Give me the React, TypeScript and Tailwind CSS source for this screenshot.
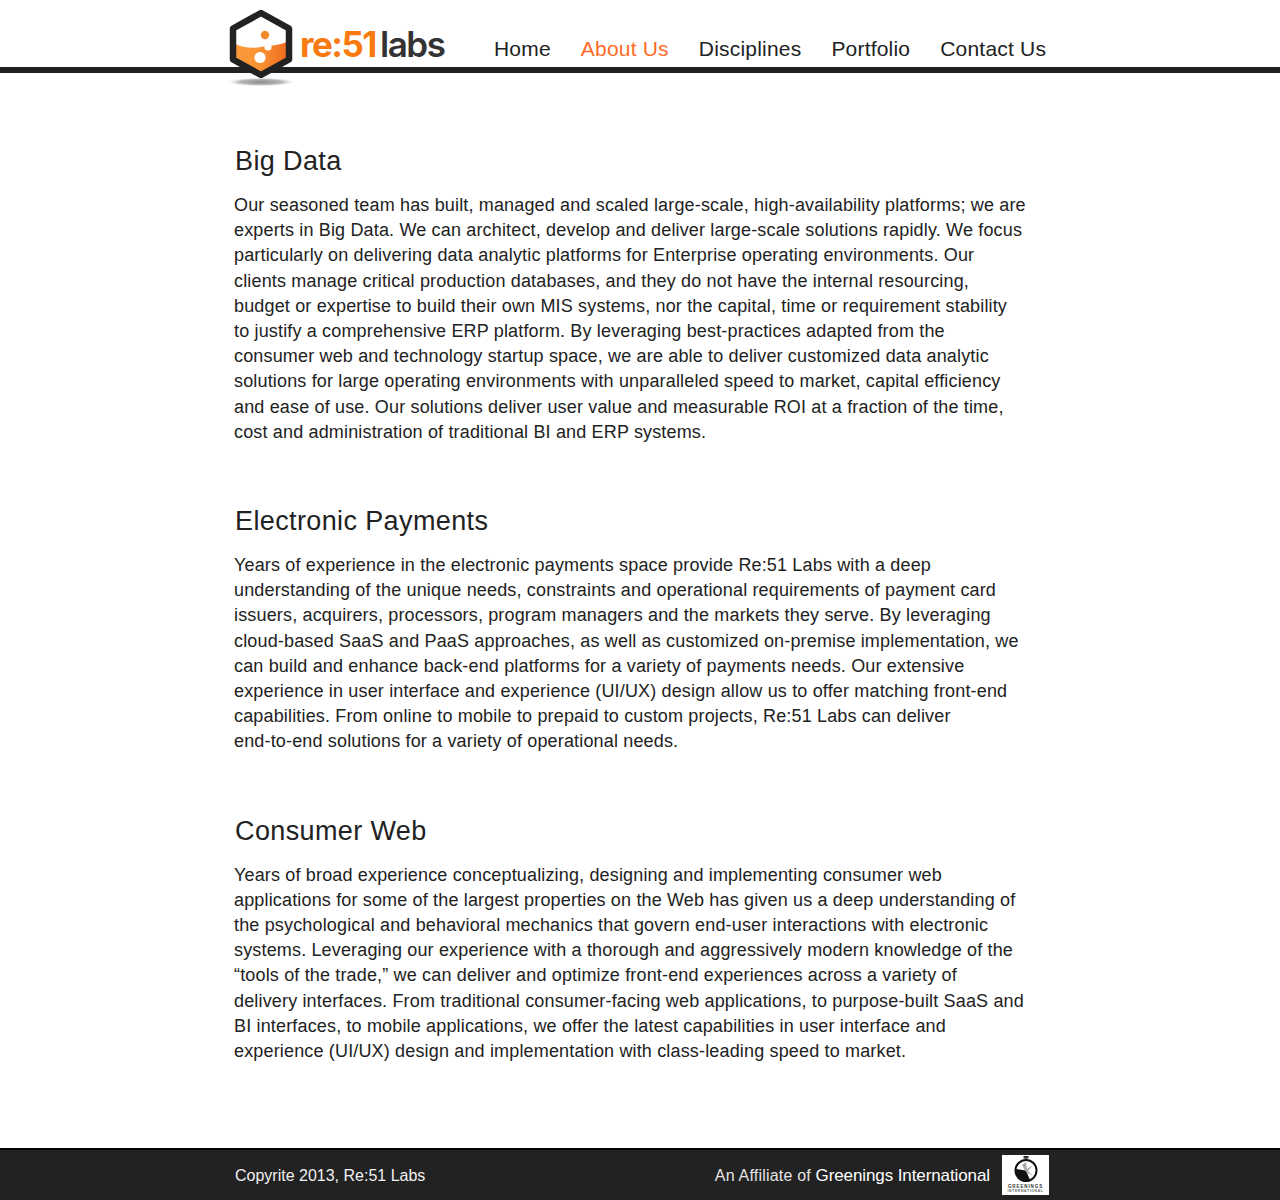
const F = "font-['Liberation_Sans',Arial,sans-serif]";

const sections = [
  {
    title: "Big Data",
    lines: [
      "Our seasoned team has built, managed and scaled large-scale, high-availability platforms; we are",
      "experts in Big Data. We can architect, develop and deliver large-scale solutions rapidly. We focus",
      "particularly on delivering data analytic platforms for Enterprise operating environments. Our",
      "clients manage critical production databases, and they do not have the internal resourcing,",
      "budget or expertise to build their own MIS systems, nor the capital, time or requirement stability",
      "to justify a comprehensive ERP platform. By leveraging best-practices adapted from the",
      "consumer web and technology startup space, we are able to deliver customized data analytic",
      "solutions for large operating environments with unparalleled speed to market, capital efficiency",
      "and ease of use. Our solutions deliver user value and measurable ROI at a fraction of the time,",
      "cost and administration of traditional BI and ERP systems.",
    ],
  },
  {
    title: "Electronic Payments",
    lines: [
      "Years of experience in the electronic payments space provide Re:51 Labs with a deep",
      "understanding of the unique needs, constraints and operational requirements of payment card",
      "issuers, acquirers, processors, program managers and the markets they serve. By leveraging",
      "cloud-based SaaS and PaaS approaches, as well as customized on-premise implementation, we",
      "can build and enhance back-end platforms for a variety of payments needs. Our extensive",
      "experience in user interface and experience (UI/UX) design allow us to offer matching front-end",
      "capabilities. From online to mobile to prepaid to custom projects, Re:51 Labs can deliver",
      "end-to-end solutions for a variety of operational needs.",
    ],
  },
  {
    title: "Consumer Web",
    lines: [
      "Years of broad experience conceptualizing, designing and implementing consumer web",
      "applications for some of the largest properties on the Web has given us a deep understanding of",
      "the psychological and behavioral mechanics that govern end-user interactions with electronic",
      "systems. Leveraging our experience with a thorough and aggressively modern knowledge of the",
      "“tools of the trade,” we can deliver and optimize front-end experiences across a variety of",
      "delivery interfaces. From traditional consumer-facing web applications, to purpose-built SaaS and",
      "BI interfaces, to mobile applications, we offer the latest capabilities in user interface and",
      "experience (UI/UX) design and implementation with class-leading speed to market.",
    ],
  },
];

const nav = ["Home", "About Us", "Disciplines", "Portfolio", "Contact Us"];

function Hex() {
  return (
    <svg width="76" height="90" viewBox="0 0 76 90" className="block">
      <defs>
        <linearGradient id="liq" x1="0" y1="0" x2="1" y2="0">
          <stop offset="0" stopColor="#fb9a3c" />
          <stop offset="0.45" stopColor="#fa9433" />
          <stop offset="1" stopColor="#ef6a1e" />
        </linearGradient>
        <radialGradient id="shadow">
          <stop offset="0" stopColor="#8c8c8c" />
          <stop offset="0.6" stopColor="#b8b8b8" />
          <stop offset="1" stopColor="#ffffff" stopOpacity="0" />
        </radialGradient>
      </defs>
      <ellipse cx="36" cy="82" rx="36" ry="4.5" fill="url(#shadow)" />
      <path d="M36 13 L64 28.5 L64 59.5 L36 75 L8 59.5 L8 28.5 Z" fill="#fff" />
      <path d="M8 43 C18 48 28 48.5 36 47 C46 45 54 46 64 41 L64 59.5 L36 75 L8 59.5 Z" fill="url(#liq)" />
      <path d="M36 13 L64 28.5 L64 59.5 L36 75 L8 59.5 L8 28.5 Z" fill="none" stroke="#222" strokeWidth="6.5" strokeLinejoin="round" />
      <circle cx="40" cy="35" r="4.2" fill="#f58a2c" />
      <circle cx="43" cy="47" r="3.6" fill="#fff" />
      <circle cx="35" cy="57.5" r="5.6" fill="#fff" />
    </svg>
  );
}

export default function App() {
  return (
    <div className={`${F} min-h-[1200px] flex flex-col bg-white text-[#222]`}>
      <header className="relative h-[73px] border-b-[6px] border-[#222]">
        <div className="relative mx-auto w-[812px] h-full">
          <div className="absolute left-[-9px] top-0 z-10 flex">
            <Hex />
          </div>
          <div className="absolute left-[66px] top-[21px] flex items-baseline text-[35px] leading-[46px] font-bold font-['Inter',sans-serif]">
            <span className="text-[#f97a10] tracking-[-1.5px]">re:51</span>
            <span className="text-[#333] ml-[4px] tracking-[-1.4px] font-semibold">labs</span>
          </div>
          <nav className="absolute left-[260px] top-[35px] flex gap-[30px] text-[21px] leading-[28px] tracking-[0.2px] whitespace-nowrap">
            {nav.map((n) => (
              <span key={n} className={n === "About Us" ? "text-[#ff6a26]" : "text-[#222]"}>
                {n}
              </span>
            ))}
          </nav>
        </div>
      </header>

      <main className="mx-auto w-[812px] flex-1 pt-[70px]">
        {sections.map((s) => (
          <section key={s.title} className="mb-[58px]">
            <h2 className="text-[27px] leading-[36px] tracking-[0.38px] text-[#222] pl-px mb-[14px]">{s.title}</h2>
            <p className="text-[18px] leading-[25.2px] tracking-[0.16px] text-[#222] whitespace-nowrap">
              {s.lines.map((l) => (
                <span key={l} className="block">{l}</span>
              ))}
            </p>
          </section>
        ))}
      </main>

      <footer className="h-[52px] bg-[#222] border-t-2 border-black text-white">
        <div className="mx-auto w-[812px] h-full flex items-center justify-between text-[16px]">
          <span className="pl-px pt-[2px] text-[#f0f0f0]">Copyrite 2013, Re:51 Labs</span>
          <div className="flex items-center">
            <span className="pt-[2px] text-[#e4e4e4] tracking-[0.2px]">
              An Affiliate of <span className="text-white text-[17px] tracking-[-0.1px]">Greenings International</span>
            </span>
            <div className="ml-[12px] mr-[-3px] w-[47px] h-[40px] bg-white flex flex-col items-center justify-start pt-[1px]">
              <svg width="26" height="27" viewBox="0 0 26 27" className="block">
                <rect x="10.5" y="0" width="5" height="2.5" fill="#333" />
                <rect x="12" y="2" width="2" height="2" fill="#555" />
                <circle cx="13" cy="14.5" r="10.5" fill="#fff" stroke="#111" strokeWidth="2" />
                <path d="M3 13 L13 14.5 L17 24 A10.5 10.5 0 0 1 3 13 Z" fill="#111" />
                <path d="M13 6 L14 13 L20 9 L15 15 L20 20 L13 16 L9 9 Z" fill="#aaa" />
              </svg>
              <span className="block text-[#333] text-[4.5px] leading-[5px] font-bold tracking-[0.9px] mt-[1px] whitespace-nowrap">GREENINGS</span>
              <span className="block text-[#666] text-[3.5px] leading-[4px] font-bold tracking-[0.6px] whitespace-nowrap">INTERNATIONAL</span>
            </div>
          </div>
        </div>
      </footer>
    </div>
  );
}
